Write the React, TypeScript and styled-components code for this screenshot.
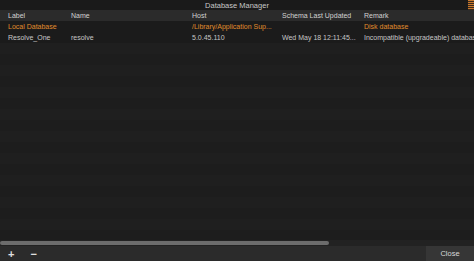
import React from 'react'
import styled, { createGlobalStyle } from 'styled-components'

const Global = createGlobalStyle`
  html, body { margin: 0; padding: 0; background: #1c1c1c; }
  body { font-family: "Liberation Sans", Arial, sans-serif; }
`

const Window = styled.div`
  width: 474px;
  height: 261px;
  display: flex;
  flex-direction: column;
  background: #1e1e1e;
  overflow: hidden;
`

const TitleBar = styled.div`
  position: relative;
  height: 10px;
  background: #1a1a1a;
  display: flex;
  align-items: center;
  justify-content: center;
  color: #c8c8c8;
  font-size: 7.5px;
`

const Grip = styled.div`
  position: absolute;
  right: 0;
  top: 0;
  width: 6px;
  height: 10px;
  background: repeating-linear-gradient(#c9782c 0 1px, #3a2a1c 1px 2px);
`

const Table = styled.div`
  flex: 1;
  display: flex;
  flex-direction: column;
  background: #1f1f1f;
`

const Row = styled.div<{ $head?: boolean; $orange?: boolean }>`
  display: grid;
  grid-template-columns: 63px 121px 90px 82px 1fr;
  height: 11px;
  background: ${({ $head }) => ($head ? '#2b2b2b' : '#1b1b1b')};
  color: ${({ $head, $orange }) => ($orange ? '#e08c2c' : $head ? '#d2d2d2' : '#c6c6c6')};
  font-size: 7px;
  white-space: nowrap;
`

const Cell = styled.div`
  padding-left: 8px;
  line-height: 11px;
  height: 11px;
  overflow: hidden;
`

const Empty = styled.div`
  flex: 1;
  background: repeating-linear-gradient(#1f1f1f 0 11px, #1d1d1d 11px 22px);
`

const ScrollTrack = styled.div`
  height: 6px;
  background: #222;
  display: flex;
  align-items: center;
`

const Thumb = styled.div`
  width: 329px;
  height: 4px;
  background: #6c6c6c;
  border-radius: 2px;
`

const BottomBar = styled.div`
  height: 15px;
  background: #2b2b2b;
  display: flex;
  align-items: center;
  justify-content: space-between;
`

const Tools = styled.div`
  display: flex;
  align-items: center;
  gap: 16px;
  padding-left: 8px;
  color: #e0e0e0;
  font-size: 11px;
  font-weight: bold;
`

const CloseBtn = styled.button`
  height: 15px;
  width: 48px;
  border: none;
  background: #363636;
  color: #d8d8d8;
  font-family: inherit;
  font-size: 7.5px;
  padding: 0;
`

const rows = [
  ['Local Database', '', '/Library/Application Sup...', '', 'Disk database'],
  ['Resolve_One', 'resolve', '5.0.45.110', 'Wed May 18 12:11:45...', 'Incompatible (upgradeable) database'],
]

export default function App() {
  return (
    <>
      <Global />
      <Window>
        <TitleBar>
          Database Manager
          <Grip />
        </TitleBar>
        <Table>
          <Row $head>
            {['Label', 'Name', 'Host', 'Schema Last Updated', 'Remark'].map(h => (
              <Cell key={h}>{h}</Cell>
            ))}
          </Row>
          {rows.map((r, ri) => (
            <Row key={ri} $orange={ri === 0}>
              {r.map((c, i) => (
                <Cell key={i}>{c}</Cell>
              ))}
            </Row>
          ))}
          <Empty />
        </Table>
        <ScrollTrack>
          <Thumb />
        </ScrollTrack>
        <BottomBar>
          <Tools>
            <span>+</span>
            <span>−</span>
          </Tools>
          <CloseBtn>Close</CloseBtn>
        </BottomBar>
      </Window>
    </>
  )
}
